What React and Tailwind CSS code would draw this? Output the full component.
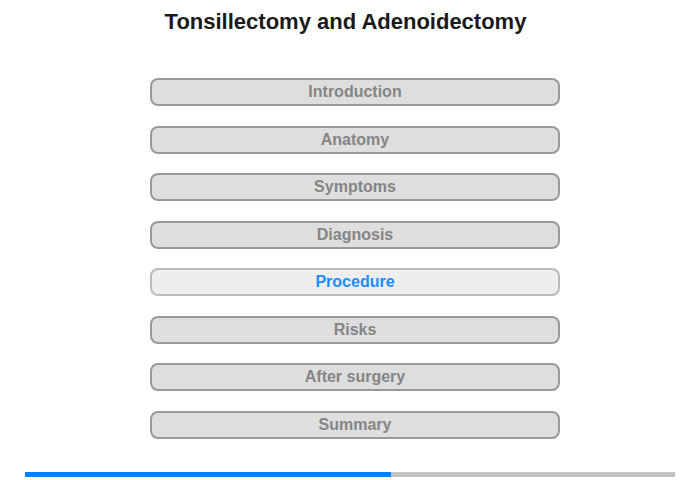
import React from 'react';

const sections = [
    'Introduction',
    'Anatomy',
    'Symptoms',
    'Diagnosis',
    'Procedure',
    'Risks',
    'After surgery',
    'Summary',
];

const App = () => {
    const active = 'Procedure';

    return (
        <div className="w-[700px] h-[480px] bg-white overflow-hidden" style={{ fontFamily: '"Liberation Sans", Arial, sans-serif' }}>
            <div className="w-[691px] pt-[9px] text-center">
                <h1 className="text-[22px] leading-[26px] font-bold text-[#1a1a1a]">Tonsillectomy and Adenoidectomy</h1>
            </div>

            <div className="ml-[150px] w-[410px] mt-[43px] flex flex-col gap-[19.5px]">
                {sections.map(s => {
                    const isActive = s === active;
                    return (
                        <button
                            key={s}
                            className={isActive
                                ? 'h-[28px] w-full rounded-[8px] border-2 border-[#bbbbbb] bg-[#eeeeee] text-[#1a8cff] text-[16px] font-bold leading-none'
                                : 'h-[28px] w-full rounded-[8px] border-2 border-[#999999] bg-[#dedede] text-[#858585] text-[16px] font-bold leading-none'}
                        >
                            {s}
                        </button>
                    );
                })}
            </div>

            <div className="mx-[25px] mt-[33px] h-[5px] flex">
                <div className="w-[366px] h-full bg-[#0080ff]" />
                <div className="flex-1 h-full bg-[#c4c4c4]" />
            </div>
        </div>
    );
};

export default App;
